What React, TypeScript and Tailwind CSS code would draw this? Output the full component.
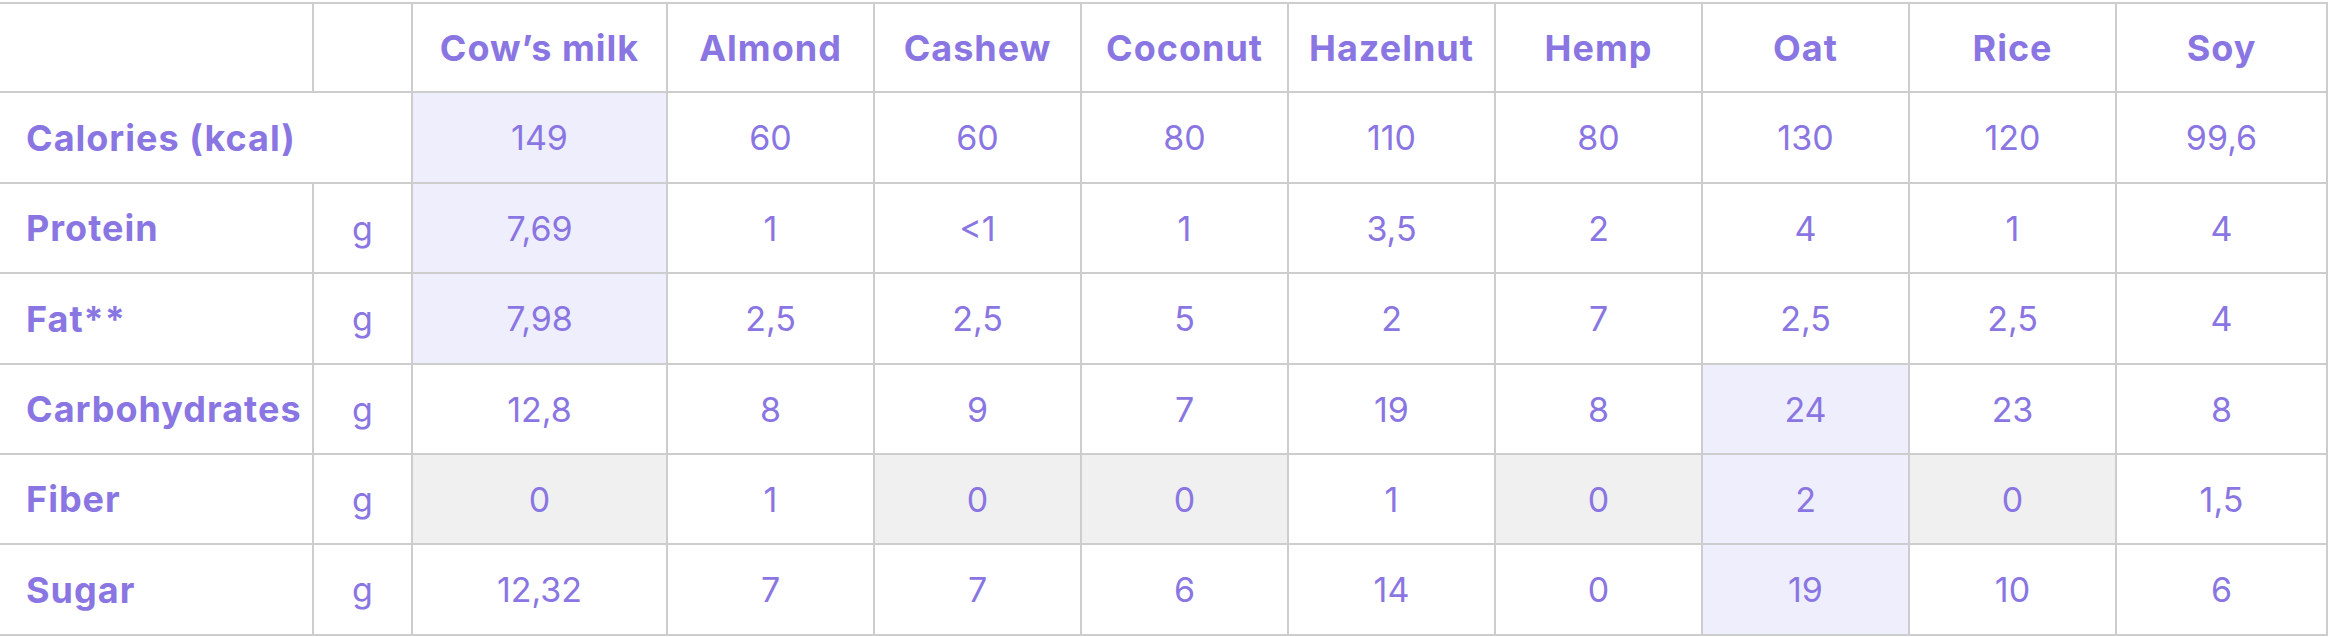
import React from "react"

const columns = ["Cow’s milk", "Almond", "Cashew", "Coconut", "Hazelnut", "Hemp", "Oat", "Rice", "Soy"]

type Row = {
    label: string
    unit?: string
    values: string[]
    lavender: number[]
    gray: number[]
    h: string
}

const rows: Row[] = [
    { label: "Calories (kcal)", values: ["149", "60", "60", "80", "110", "80", "130", "120", "99,6"], lavender: [0], gray: [], h: "h-[91px]" },
    { label: "Protein", unit: "g", values: ["7,69", "1", "<1", "1", "3,5", "2", "4", "1", "4"], lavender: [0], gray: [], h: "h-[90px]" },
    { label: "Fat**", unit: "g", values: ["7,98", "2,5", "2,5", "5", "2", "7", "2,5", "2,5", "4"], lavender: [0], gray: [], h: "h-[91px]" },
    { label: "Carbohydrates", unit: "g", values: ["12,8", "8", "9", "7", "19", "8", "24", "23", "8"], lavender: [6], gray: [], h: "h-[90px]" },
    { label: "Fiber", unit: "g", values: ["0", "1", "0", "0", "1", "0", "2", "0", "1,5"], lavender: [6], gray: [0, 2, 3, 5, 7], h: "h-[90px]" },
    { label: "Sugar", unit: "g", values: ["12,32", "7", "7", "6", "14", "0", "19", "10", "6"], lavender: [6], gray: [], h: "h-[91px]" },
]

const cell = "flex items-center justify-center border-b-2 border-r-2 border-[#cdcdcd]"
const bold = "text-[36px] font-bold tracking-[1px]"

export default function App() {
    return (
        <div className="w-[2328px] bg-white pt-[2px] text-[#8a76e2] [font-family:Inter,'Noto_Sans',sans-serif]">
            <div className="grid grid-cols-[314px_99px_255px_repeat(7,207px)_1fr] border-t-2 border-[#cdcdcd]">
                {/* header */}
                <div className={`${cell} h-[89px]`} />
                <div className={`${cell} h-[89px]`} />
                {columns.map((c, i) => (
                    <div
                        key={c}
                        className={`${cell} h-[89px] ${bold} ${i === columns.length - 1 ? "border-r-0" : ""}`}
                    >
                        {c}
                    </div>
                ))}

                {rows.map((row) => (
                    <React.Fragment key={row.label}>
                        {row.unit ? (
                            <>
                                <div className={`${cell} ${row.h} justify-start pl-[26px] ${bold}`}>
                                    {row.label}
                                </div>
                                <div className={`${cell} ${row.h} text-[34px]`}>{row.unit}</div>
                            </>
                        ) : (
                            <div className={`${cell} ${row.h} col-span-2 justify-start pl-[26px] ${bold}`}>
                                {row.label}
                            </div>
                        )}
                        {row.values.map((v, i) => (
                            <div
                                key={i}
                                className={`${cell} ${row.h} text-[34px] ${
                                    row.lavender.includes(i)
                                        ? "bg-[#efeefc]"
                                        : row.gray.includes(i)
                                        ? "bg-[#f0f0f0]"
                                        : "bg-white"
                                } ${i === row.values.length - 1 ? "border-r-0" : ""}`}
                            >
                                {v}
                            </div>
                        ))}
                    </React.Fragment>
                ))}
            </div>
        </div>
    )
}
